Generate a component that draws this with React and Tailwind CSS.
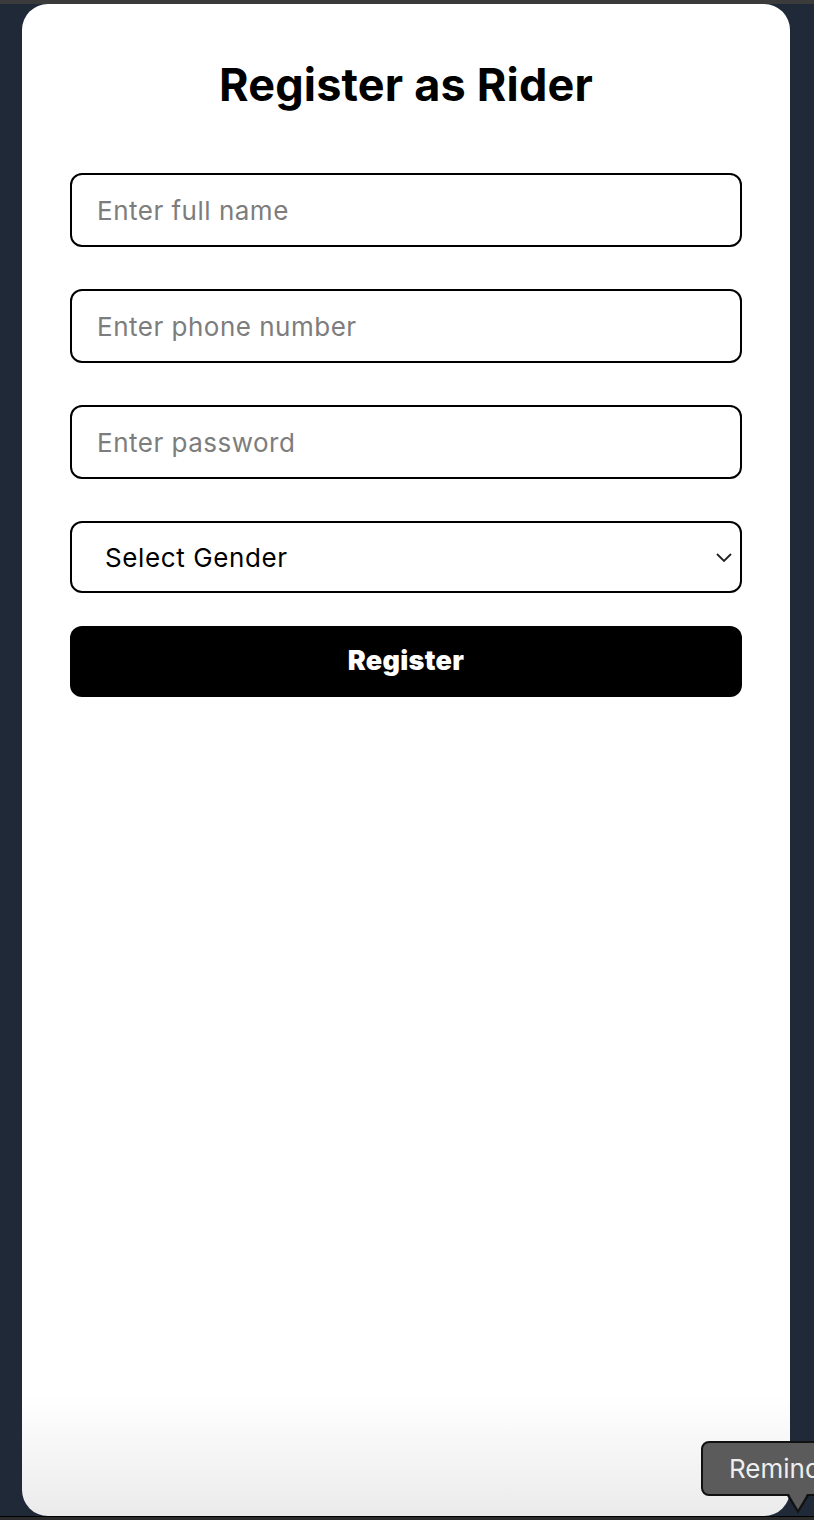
import React, { useState } from 'react';

function Field({ type = 'text', placeholder, value, onChange }) {
  return (
    <input
      type={type}
      placeholder={placeholder}
      value={value}
      onChange={onChange}
      className="w-full h-[74px] px-[25px] border-2 border-black rounded-[12px] text-[26px] tracking-[0.5px] text-black placeholder:text-[#7d7d7d] outline-none bg-white"
    />
  );
}

export default function App() {
  const [form, setForm] = useState({ name: '', phone: '', password: '', gender: '' });

  const update = (key) => (e) => setForm({ ...form, [key]: e.target.value });

  return (
    <div className="relative min-h-[1520px] flex flex-col bg-[#1f2937] font-['Inter','Noto_Sans',sans-serif]">
      <div className="h-[4px] bg-[#3b3b3b]" />
      <div className="flex-1 flex">
        <div className="ml-[22px] w-[768px] rounded-[26px] bg-[linear-gradient(to_bottom,#ffffff_92%,#ebebeb)] px-[48px] pt-[54px]">
          <h1 className="text-center text-[45px] leading-[54px] font-bold text-black tracking-[0.2px]">
            Register as Rider
          </h1>
          <form className="mt-[61px] flex flex-col" onSubmit={(e) => e.preventDefault()}>
            <div className="flex flex-col gap-[42px]">
              <Field placeholder="Enter full name" value={form.name} onChange={update('name')} />
              <Field placeholder="Enter phone number" value={form.phone} onChange={update('phone')} />
              <Field type="password" placeholder="Enter password" value={form.password} onChange={update('password')} />
            </div>
            <div className="relative mt-[42px]">
              <select
                value={form.gender}
                onChange={update('gender')}
                className="appearance-none w-full h-[72px] pl-[33px] pr-[40px] border-2 border-black rounded-[12px] text-[26px] tracking-[0.6px] text-black bg-white outline-none"
              >
                <option value="">Select Gender</option>
                <option value="male">Male</option>
                <option value="female">Female</option>
                <option value="other">Other</option>
              </select>
              <svg className="absolute right-[9px] top-1/2 -translate-y-1/2 pointer-events-none" width="18" height="12" viewBox="0 0 18 12" fill="none">
                <path d="M2 3l7 7 7-7" stroke="#222" strokeWidth="1.8" />
              </svg>
            </div>
            <button
              type="submit"
              className="mt-[33px] h-[71px] rounded-[12px] bg-black text-white text-[27px] font-black tracking-[0.3px]"
            >
              Register
            </button>
          </form>
        </div>
      </div>
      <div className="h-[4px] bg-[#2b2b2b] border-t border-black" />

      <div className="absolute left-[701px] top-[1441px]">
        <div className="h-[55px] w-[140px] rounded-[8px] border-2 border-[#111] bg-[#5b5b5b] pl-[26px] flex items-center text-[26px] text-[#eeeeee] overflow-hidden whitespace-nowrap">
          Remind
        </div>
        <svg className="absolute left-[80px] top-[51px]" width="34" height="22" viewBox="0 0 34 22">
          <path d="M0 2 L8 2 L17 18 L26 2 L34 2 L34 0 L0 0 Z" fill="#5b5b5b" />
          <path d="M7 3.5 L17 19.5 L27 3.5" stroke="#111" strokeWidth="2" fill="none" />
        </svg>
      </div>
    </div>
  );
}
